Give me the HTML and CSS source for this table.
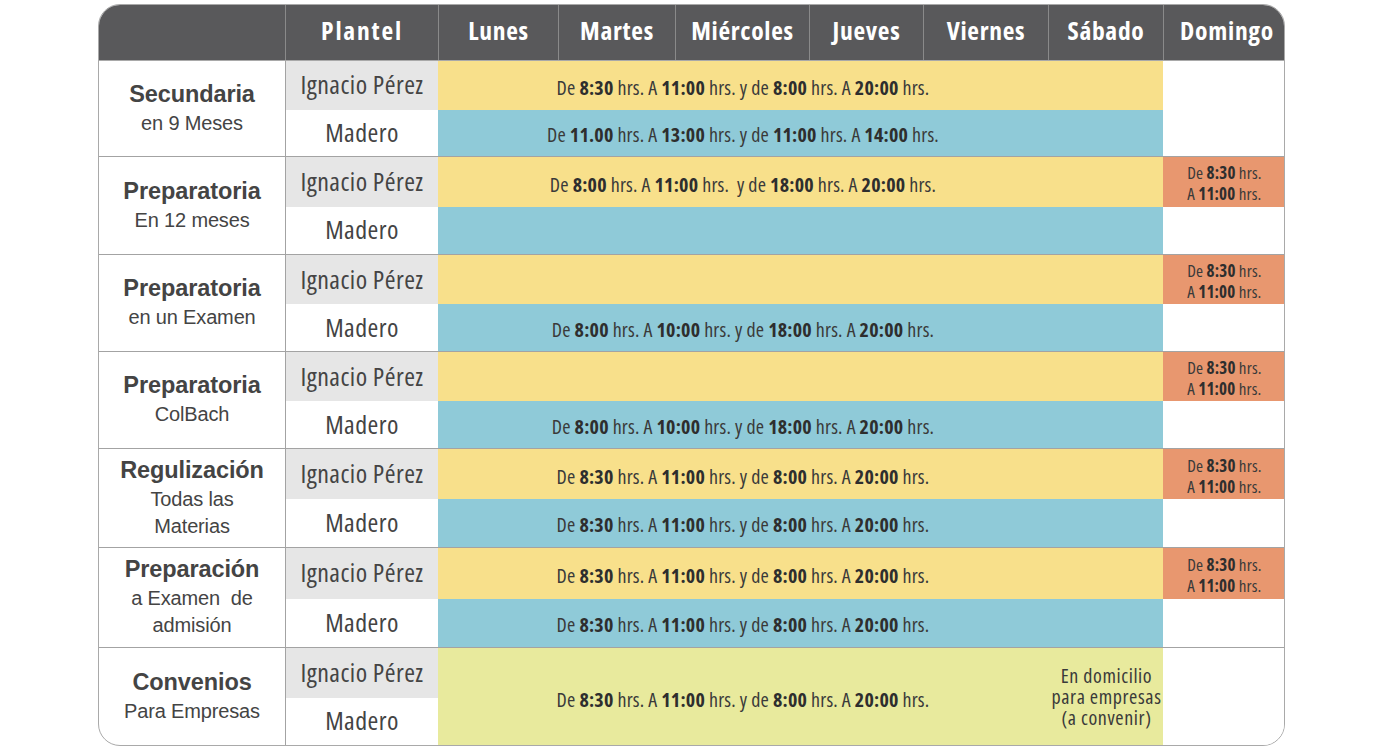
FILE: index.html
```html
<!DOCTYPE html>
<html lang="es">
<head>
<meta charset="utf-8">
<title>Horarios</title>
<link rel="stylesheet" href="styles.css">
</head>
<body>
<div class="schedule">
  <div class="thead">
    <div class="th w-course"></div>
    <div class="th w-plantel">Plantel</div>
    <div class="th w-lun">Lunes</div>
    <div class="th w-mar">Martes</div>
    <div class="th w-mie">Miércoles</div>
    <div class="th w-jue">Jueves</div>
    <div class="th w-vie">Viernes</div>
    <div class="th w-sab">Sábado</div>
    <div class="th w-dom">Domingo</div>
  </div>
  <div class="tbody">
    <div class="group">
      <div class="course"><span class="c-title">Secundaria</span><span class="c-sub">en 9 Meses</span></div>
      <div class="plantel ip">Ignacio Pérez</div>
      <div class="plantel md">Madero</div>
      <div class="slot yellow r1"><span class="hours">De <b>8:30</b> hrs. A <b>11:00</b> hrs. y de <b>8:00</b> hrs. A <b>20:00</b> hrs.</span></div>
      <div class="slot blue r2"><span class="hours">De <b>11.00</b> hrs. A <b>13:00</b> hrs. y de <b>11:00</b> hrs. A <b>14:00</b> hrs.</span></div>
      <div class="dom both"></div>
    </div>
    <div class="group">
      <div class="course"><span class="c-title">Preparatoria</span><span class="c-sub">En 12 meses</span></div>
      <div class="plantel ip">Ignacio Pérez</div>
      <div class="plantel md">Madero</div>
      <div class="slot yellow r1"><span class="hours">De <b>8:00</b> hrs. A <b>11:00</b> hrs.&nbsp; y de <b>18:00</b> hrs. A <b>20:00</b> hrs.</span></div>
      <div class="slot blue r2"></div>
      <div class="dom orange r1"><span>De <b>8:30</b> hrs.<br>A <b>11:00</b> hrs.</span></div>
      <div class="dom r2"></div>
    </div>
    <div class="group">
      <div class="course"><span class="c-title">Preparatoria</span><span class="c-sub">en un Examen</span></div>
      <div class="plantel ip">Ignacio Pérez</div>
      <div class="plantel md">Madero</div>
      <div class="slot yellow r1"></div>
      <div class="slot blue r2"><span class="hours">De <b>8:00</b> hrs. A <b>10:00</b> hrs. y de <b>18:00</b> hrs. A <b>20:00</b> hrs.</span></div>
      <div class="dom orange r1"><span>De <b>8:30</b> hrs.<br>A <b>11:00</b> hrs.</span></div>
      <div class="dom r2"></div>
    </div>
    <div class="group">
      <div class="course"><span class="c-title">Preparatoria</span><span class="c-sub">ColBach</span></div>
      <div class="plantel ip">Ignacio Pérez</div>
      <div class="plantel md">Madero</div>
      <div class="slot yellow r1"></div>
      <div class="slot blue r2"><span class="hours">De <b>8:00</b> hrs. A <b>10:00</b> hrs. y de <b>18:00</b> hrs. A <b>20:00</b> hrs.</span></div>
      <div class="dom orange r1"><span>De <b>8:30</b> hrs.<br>A <b>11:00</b> hrs.</span></div>
      <div class="dom r2"></div>
    </div>
    <div class="group">
      <div class="course"><span class="c-title">Regulización</span><span class="c-sub">Todas las</span><span class="c-sub">Materias</span></div>
      <div class="plantel ip">Ignacio Pérez</div>
      <div class="plantel md">Madero</div>
      <div class="slot yellow r1"><span class="hours">De <b>8:30</b> hrs. A <b>11:00</b> hrs. y de <b>8:00</b> hrs. A <b>20:00</b> hrs.</span></div>
      <div class="slot blue r2"><span class="hours">De <b>8:30</b> hrs. A <b>11:00</b> hrs. y de <b>8:00</b> hrs. A <b>20:00</b> hrs.</span></div>
      <div class="dom orange r1"><span>De <b>8:30</b> hrs.<br>A <b>11:00</b> hrs.</span></div>
      <div class="dom r2"></div>
    </div>
    <div class="group">
      <div class="course"><span class="c-title">Preparación</span><span class="c-sub">a Examen&nbsp; de</span><span class="c-sub">admisión</span></div>
      <div class="plantel ip">Ignacio Pérez</div>
      <div class="plantel md">Madero</div>
      <div class="slot yellow r1"><span class="hours">De <b>8:30</b> hrs. A <b>11:00</b> hrs. y de <b>8:00</b> hrs. A <b>20:00</b> hrs.</span></div>
      <div class="slot blue r2"><span class="hours">De <b>8:30</b> hrs. A <b>11:00</b> hrs. y de <b>8:00</b> hrs. A <b>20:00</b> hrs.</span></div>
      <div class="dom orange r1"><span>De <b>8:30</b> hrs.<br>A <b>11:00</b> hrs.</span></div>
      <div class="dom r2"></div>
    </div>
    <div class="group">
      <div class="course"><span class="c-title">Convenios</span><span class="c-sub">Para Empresas</span></div>
      <div class="plantel ip">Ignacio Pérez</div>
      <div class="plantel md">Madero</div>
      <div class="slot green both split">
        <span class="hours">De <b>8:30</b> hrs. A <b>11:00</b> hrs. y de <b>8:00</b> hrs. A <b>20:00</b> hrs.</span>
        <span class="sab-note">En domicilio<br>para empresas<br>(a convenir)</span>
      </div>
      <div class="dom both"></div>
    </div>
  </div>
</div>
</body>
</html>
```

FILE: styles.css
```css
* { box-sizing: border-box; }

body {
  margin: 0;
  background: #ffffff;
  font-family: "Open Sans", "Liberation Sans", sans-serif;
  font-stretch: 75%;
  color: #3b3b3b;
}

.schedule {
  margin: 4px 0 0 98px;
  width: 1187px;
  border: 1px solid #a9a9a9;
  border-radius: 22px;
  overflow: hidden;
  background: #ffffff;
}

.thead {
  display: flex;
  height: 56px;
  background: #59595b;
  border-bottom: 1px solid #a9a9a9;
}

.th {
  flex: none;
  display: flex;
  align-items: center;
  justify-content: center;
  color: #ffffff;
  font-weight: bold;
  font-size: 25.5px;
  letter-spacing: 0.7px;
  white-space: nowrap;
  border-left: 1px solid #8a8a8a;
  padding-bottom: 5px;
}
.th.w-course { width: 186px; border-left: none; }
.w-plantel { width: 153px; letter-spacing: 1.8px; }
.w-lun { width: 120px; }
.w-mar { width: 117px; }
.w-mie { width: 134px; }
.w-jue { width: 114px; }
.w-vie { width: 125px; }
.w-sab { width: 115px; }
.w-dom { width: 121px; padding-left: 6px; }

.tbody {
  display: grid;
  grid-template-rows: 96px 98px 97px 97px 99px 100px 97px;
}

.group {
  display: grid;
  grid-template-columns: 186px 153px 725px 121px;
  grid-template-rows: calc(50% + 1px) 1fr;
  border-bottom: 1px solid #a3a3a3;
}
.group:last-child { border-bottom: none; }

.course {
  grid-column: 1;
  grid-row: 1 / 3;
  display: flex;
  flex-direction: column;
  align-items: center;
  justify-content: center;
  color: #444444;
  font-family: "Liberation Sans", Arial, sans-serif;
  font-stretch: normal;
  padding-bottom: 2px;
}
.c-title {
  font-weight: bold;
  font-size: 23.5px;
  line-height: 31px;
  letter-spacing: -0.1px;
}
.c-sub {
  font-size: 20px;
  line-height: 27px;
  letter-spacing: -0.15px;
  white-space: nowrap;
}

.plantel {
  grid-column: 2;
  display: flex;
  align-items: center;
  justify-content: center;
  font-size: 26px;
  letter-spacing: 0.45px;
  white-space: nowrap;
  color: #444444;
  border-left: 1px solid #a3a3a3;
  padding-bottom: 2px;
}
.plantel.ip { grid-row: 1; background: #e6e6e6; }
.plantel.md { grid-row: 2; background: #ffffff; }

.slot {
  grid-column: 3;
  display: flex;
  align-items: center;
  justify-content: center;
  padding-right: 115px;
  padding-top: 3px;
  font-size: 20px;
  letter-spacing: 0.2px;
  white-space: nowrap;
  color: #3a3a3a;
}
.slot.yellow { padding-top: 5px; }
.slot b { color: #2e2e2e; }
.r1 { grid-row: 1; }
.r2 { grid-row: 2; }
.both { grid-row: 1 / 3; }

.yellow { background: #f8e08b; }
.blue { background: #8fcad8; }
.green { background: #e8ea9d; }

.slot.split {
  padding-right: 0;
  padding-top: 0;
  justify-content: flex-start;
}
.slot.split .hours {
  width: 610px;
  text-align: center;
  padding-top: 6px;
}
.sab-note {
  width: 115px;
  text-align: center;
  font-size: 20px;
  letter-spacing: 0.6px;
  line-height: 21px;
  padding-left: 2px;
}

.dom {
  grid-column: 4;
  display: flex;
  align-items: center;
  justify-content: center;
  background: #ffffff;
  font-size: 17px;
  letter-spacing: 0.15px;
  line-height: 21px;
  white-space: nowrap;
  color: #3a3a3a;
  padding-left: 2px;
  padding-top: 3px;
}
.dom span { text-align: left; }
.dom b { color: #2e2e2e; }
.dom.orange { background: #e8976f; }
```
